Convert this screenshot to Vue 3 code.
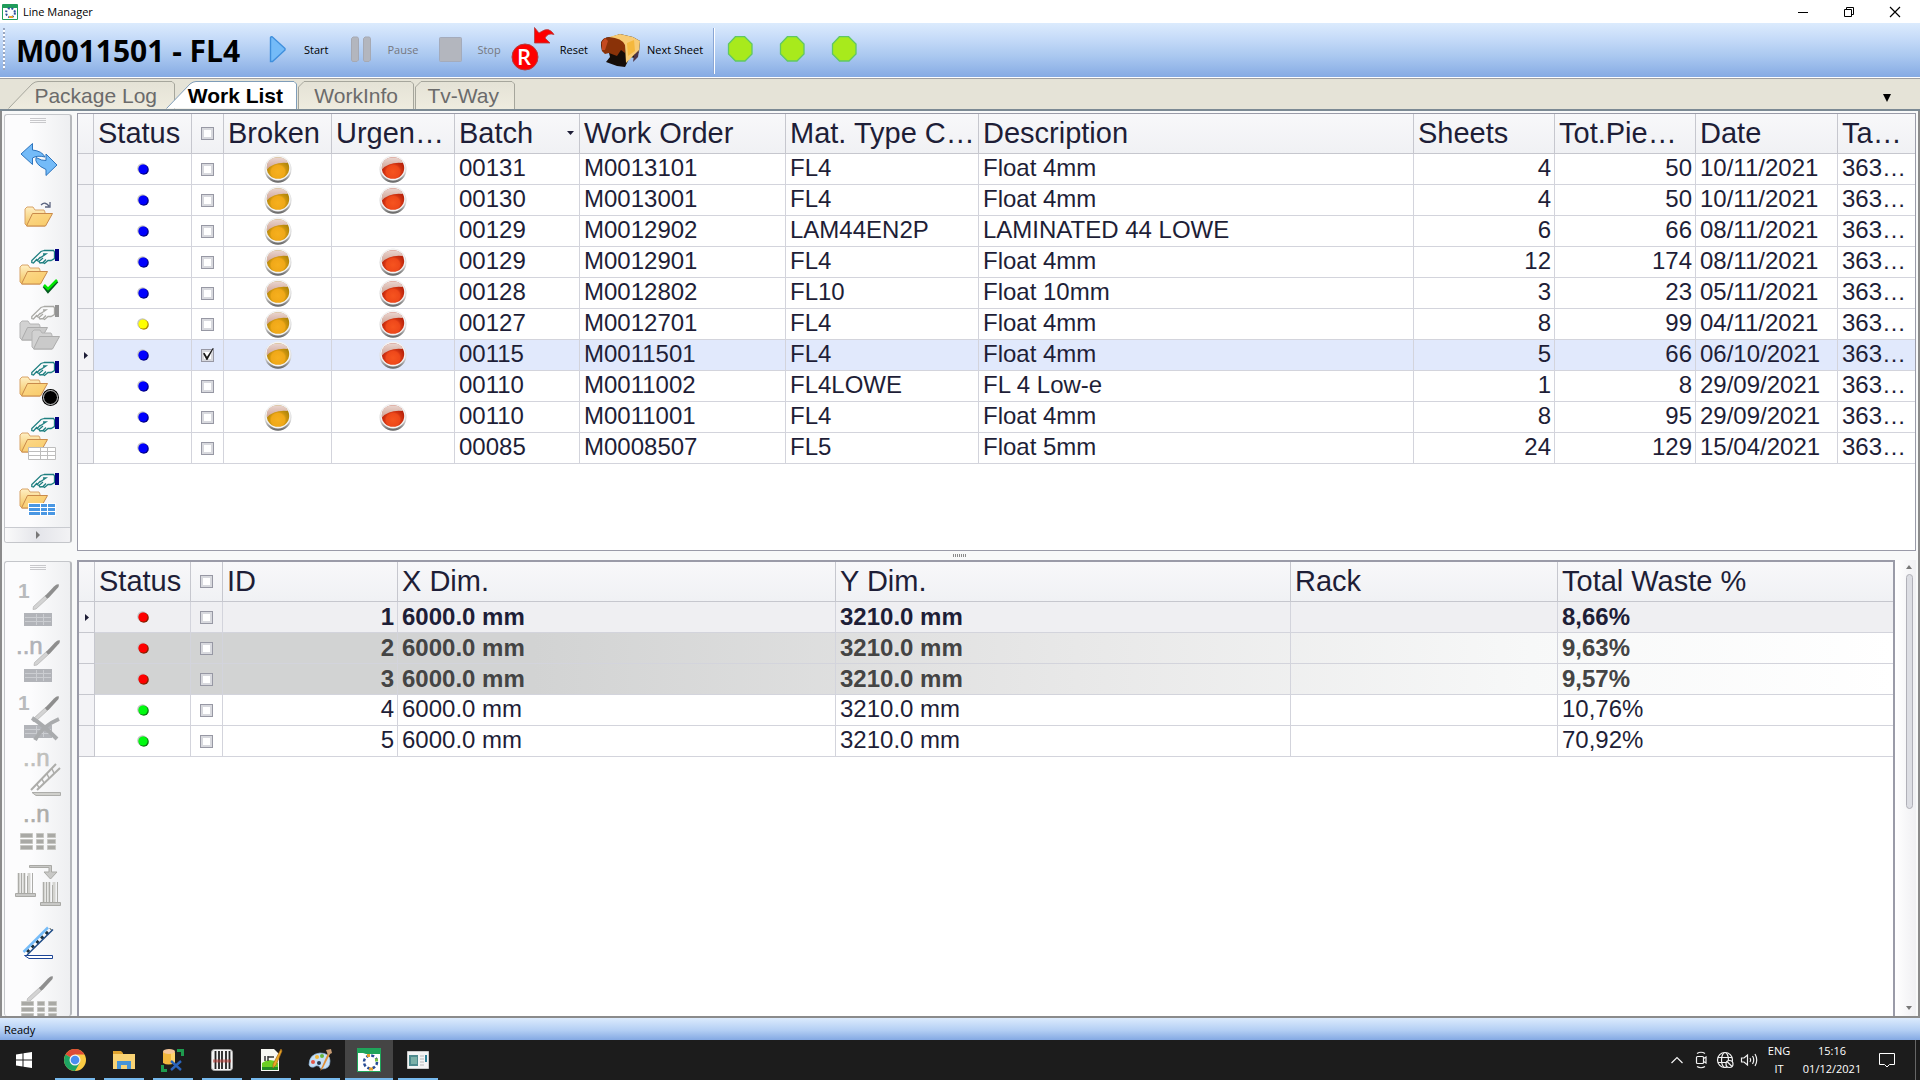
<script setup>
import { ref } from 'vue'

const tabs = [
  { name: 'Package Log', kind: 'first', w: 168 },
  { name: 'Work List', kind: 'active', w: 132 },
  { name: 'WorkInfo', kind: 'small', w: 117 },
  { name: 'Tv-Way', kind: 'small', w: 101 }
]

const tabPath = (t) => {
  const r = t.w - 1
  if (t.kind === 'small') return `M0.5 28V6L6 0.5H${r - 3}L${r - 0.5} 3V28`
  return `M0.5 27.5L24 3Q27 0.5 30 0.5H${r - 3}L${r - 0.5} 3V28`
}

const mk = (status, broken, urgent, batch, order, type, desc, sheets, pieces, date, checked = false) =>
  ({ status, broken, urgent, batch, order, type, desc, sheets, pieces, date, checked })

const orders = ref([
  mk('blue', 1, 1, '00131', 'M0013101', 'FL4', 'Float 4mm', 4, 50, '10/11/2021'),
  mk('blue', 1, 1, '00130', 'M0013001', 'FL4', 'Float 4mm', 4, 50, '10/11/2021'),
  mk('blue', 1, 0, '00129', 'M0012902', 'LAM44EN2P', 'LAMINATED 44 LOWE', 6, 66, '08/11/2021'),
  mk('blue', 1, 1, '00129', 'M0012901', 'FL4', 'Float 4mm', 12, 174, '08/11/2021'),
  mk('blue', 1, 1, '00128', 'M0012802', 'FL10', 'Float 10mm', 3, 23, '05/11/2021'),
  mk('yellow', 1, 1, '00127', 'M0012701', 'FL4', 'Float 4mm', 8, 99, '04/11/2021'),
  mk('blue', 1, 1, '00115', 'M0011501', 'FL4', 'Float 4mm', 5, 66, '06/10/2021', true),
  mk('blue', 0, 0, '00110', 'M0011002', 'FL4LOWE', 'FL 4 Low-e', 1, 8, '29/09/2021'),
  mk('blue', 1, 1, '00110', 'M0011001', 'FL4', 'Float 4mm', 8, 95, '29/09/2021'),
  mk('blue', 0, 0, '00085', 'M0008507', 'FL5', 'Float 5mm', 24, 129, '15/04/2021')
])

const sheets = ref([
  { id: 1, status: 'red', waste: '8,66%', look: 'current' },
  { id: 2, status: 'red', waste: '9,63%', look: 'done' },
  { id: 3, status: 'red', waste: '9,57%', look: 'done' },
  { id: 4, status: 'green', waste: '10,76%', look: '' },
  { id: 5, status: 'green', waste: '70,92%', look: '' }
])

const bullets = {
  blue: ['#0000fe', '#000086'],
  yellow: ['#ffff00', '#b08a00'],
  red: ['#fe0000', '#862200'],
  green: ['#00fa10', '#0a7a10']
}

const folderTools = ['refresh', 'open', 'check', 'multi', 'record', 'grid', 'gridfill']
const sheetTools = ['cut-one', 'cut-n', 'cut-del', 'rack-n', 'rows-n', 'move', 'rack', 'cut-rows']
const apps = ['chrome', 'explorer', 'dbtools', 'barcode', 'notepad', 'paint', 'line', 'window']
</script>

<template>
  <div class="window">
    <svg class="defs" aria-hidden="true">
      <defs>
        <linearGradient id="gFolder" x1="0" y1="0" x2="0" y2="1">
          <stop offset="0" stop-color="#fff0c4" /><stop offset="1" stop-color="#f3c35c" />
        </linearGradient>
        <linearGradient id="gFront" x1="0" y1="0" x2="1" y2="1">
          <stop offset="0" stop-color="#fdd98a" /><stop offset="1" stop-color="#f7ca68" />
        </linearGradient>
        <linearGradient id="gRim" x1="0" y1="0" x2="0" y2="1">
          <stop offset="0" stop-color="#dcdcdc" /><stop offset=".6" stop-color="#dedede" /><stop offset="1" stop-color="#606060" />
        </linearGradient>
        <radialGradient id="gAmber" cx=".5" cy=".68" r=".6">
          <stop offset="0" stop-color="#f6b01e" /><stop offset=".5" stop-color="#f0a818" /><stop offset=".62" stop-color="#cf960e" /><stop offset=".9" stop-color="#b0860a" />
        </radialGradient>
        <radialGradient id="gRed" cx=".5" cy=".68" r=".6">
          <stop offset="0" stop-color="#f6541f" /><stop offset=".5" stop-color="#ee481a" /><stop offset=".62" stop-color="#d23412" /><stop offset=".9" stop-color="#b8220a" />
        </radialGradient>
        <linearGradient id="gGloss" x1="0" y1="0" x2="0" y2="1">
          <stop offset="0" stop-color="#ead6d0" /><stop offset="1" stop-color="#cfa294" />
        </linearGradient>
        <linearGradient id="gTab" x1="0" y1="0" x2="0" y2="1">
          <stop offset="0" stop-color="#e4e2d6" /><stop offset="1" stop-color="#efecdf" />
        </linearGradient>
        <symbol id="folder" viewBox="0 0 30 21" overflow="visible">
          <path d="M1 18V3L3 1H9L11 4H20L21 6V20H3Z" fill="url(#gFolder)" stroke="#d9a469" />
          <path d="M8.500 7.500H28.500L21.500 20H2.500Z" fill="url(#gFront)" stroke="#c98a4b" />
        </symbol>
        <symbol id="folderGray" viewBox="0 0 30 21" overflow="visible">
          <path d="M1 18V3L3 1H9L11 4H20L21 6V20H3Z" fill="#d2d2d2" stroke="#b4b4b4" />
          <path d="M8.500 7.500H28.500L21.500 20H2.500Z" fill="#cacaca" stroke="#acacac" />
        </symbol>
        <symbol id="hand" viewBox="0 0 28 15" overflow="visible">
          <path d="M13 1.500H22.500L23.500 3V9.500L20 11.500H17L13.500 14.500L12 13.500L15 10.500M12 13.500L9 14L8 12.500L12 9M8 12.500L6 11.500L9.500 8M6 10L2.500 14L0.800 13.500V11.500L10 2.500L13 1.500M12 5L15 5L9 9" fill="#fff" fill-opacity=".5" stroke="currentColor" stroke-width="1.300" />
        </symbol>
        <symbol id="pen" viewBox="0 0 28 28" overflow="visible">
          <path d="M1 26.500L1.500 23.500L14 12L16.500 14.500L4 26Z" fill="#d3d3d3" stroke="#b8b8b8" stroke-width=".8" />
          <path d="M13 13L22 3.500Q25 .5 27 1.500L26.500 4L17 14.500L15 15.500Z" fill="#8e8e8e" />
        </symbol>
        <symbol id="bricks" viewBox="0 0 28 13">
          <path d="M0 0H28V13H0Z" fill="#b2b4b9" />
          <path d="M1 4.500H27M1 8.500H27M12.500 1V12M19.500 1V12" stroke="#cbcdd1" />
        </symbol>
        <symbol id="rows" viewBox="0 0 36 17">
          <g fill="#a9a9a5" stroke="#c6c6c2">
            <path d="M.5 .5H12.500V4.500H.5ZM16.500 .5H23.500V4.500H16.500ZM27.500 .5H35.500V4.500H27.500Z" />
            <path d="M.5 6.500H12.500V10.500H.5ZM16.500 6.500H23.500V10.500H16.500ZM27.500 6.500H35.500V10.500H27.500Z" />
            <path d="M.5 12.500H12.500V16.500H.5ZM16.500 12.500H23.500V16.500H16.500ZM27.500 12.500H35.500V16.500H27.500Z" />
          </g>
        </symbol>
      </defs>
    </svg>

    <header class="titlebar">
      <svg width="16" height="16" viewBox="0 0 16 16">
        <path d="M.5 .5H15.500V15.500H.5Z" fill="#fff" stroke="#1f9c5a" />
        <path d="M1 1H15V4H1Z" fill="#1f9c5a" />
        <circle cx="8.500" cy="8.700" r="4.400" fill="none" stroke="#2b4f9a" stroke-width="2" stroke-dasharray="2 1.500" />
        <path d="M7 13H11" stroke="#e8a22c" stroke-width="2" /><path d="M3 5H7L5 7Z" fill="#fff" />
      </svg>
      <span class="caption">Line Manager</span>
      <button aria-label="Minimize"><svg width="12" height="12"><path d="M1 6.500H11" stroke="#000" /></svg></button>
      <button aria-label="Restore"><svg width="12" height="12"><path d="M1.500 3.500H8.500V10.500H1.500ZM3.500 3.500V1.500H10.500V8.500H8.500" fill="none" stroke="#000" /></svg></button>
      <button aria-label="Close"><svg width="12" height="12"><path d="M1 1L11 11M11 1L1 11" stroke="#000" stroke-width="1.200" /></svg></button>
    </header>

    <div class="toolbar">
      <span class="dots"></span>
      <h1>M0011501 - FL4</h1>
      <button>
        <svg width="48" height="48"><path d="M16.500 12.500Q17 11.500 18.500 12L31 23.500V25L18.500 36.500H16.500Z" fill="#74bbf8" stroke="#3f8fdc" stroke-width="1.400" /></svg>
        <span>Start</span>
      </button>
      <button disabled>
        <svg width="48" height="48"><path d="M14.500 13.500L16 12H20.500L21.500 13.500V35L20 36.500H15.500L14.500 35ZM26.500 13.500L28 12H32.500L33.500 13.500V35L32 36.500H27.500L26.500 35Z" fill="#b3b6be" stroke="#a6a9b3" /></svg>
        <span>Pause</span>
      </button>
      <button disabled>
        <svg width="48" height="48"><rect x="12.500" y="12.500" width="22" height="24" rx="1" fill="#b3b6be" stroke="#a4abbb" /></svg>
        <span>Stop</span>
      </button>
      <button>
        <svg width="48" height="48" viewBox="0 0 48 48" overflow="visible">
          <circle cx="15" cy="32" r="13" fill="#fe0000" stroke="#b43c3c" />
          <text x="7" y="40" font-family="Open Sans, sans-serif" font-weight="600" font-size="22" fill="#fff">R</text>
          <path d="M24.500 2.500V18H40L35 13Q38 7.500 44 9.500Q39 1.500 31.500 6.500L29 8Z" fill="#fe0000" stroke="#b43c3c" stroke-width=".8" />
        </svg>
        <span>Reset</span>
      </button>
      <button>
        <svg width="48" height="48" viewBox="0 0 48 48">
          <path d="M4 20Q4 12 14 12L23 9L36 12L43 16L42 27L38 33L33 32L28 42L20 41L9 37L13 32L12 28L5 26Z" fill="#160d08" />
          <path d="M4 18Q5 12 14 12Q26 12 28 18V28L24 25L20 31L12 28L8 29L5 26Z" fill="#8a3208" />
          <path d="M5 17L8 13L11 16L8 25L5 25Z" fill="#c44a20" />
          <path d="M12 12L23 9L36 12L43 16L42 27L37 30L29 38L28 20Q25 13 12 12Z" fill="#f8cb74" />
          <path d="M30 18L37 15L38 26L31 31Z" fill="#f5b83e" />
          <path d="M37 30L42 25L41 32L36 37Z" fill="#4d3546" />
        </svg>
        <span>Next Sheet</span>
      </button>
      <i class="separator"></i>
      <svg v-for="n in 3" :key="n" class="light" width="52" height="26"><path d="M8.500 .5H17.500L25 8V18L18 25H8.500L1.500 18V8Z" transform="translate(12 0)" fill="#a8ea1c" stroke="#5fc765" stroke-width="1.300" /></svg>
    </div>

    <nav class="tabs">
      <button v-for="t in tabs" :key="t.name" :class="['tab', t.kind]" :style="{ width: t.w + 'px' }">
        <svg :width="t.w" height="28"><path :d="tabPath(t)" :fill="t.kind === 'active' ? '#fff' : 'url(#gTab)'" :stroke="t.kind === 'active' ? '#7f9db9' : '#a6a69c'" /></svg>
        <span>{{ t.name }}</span>
      </button>
      <button class="tablist" aria-label="Tab list"><svg width="8" height="8"><path d="M0 0H8L4 8Z" /></svg></button>
    </nav>

    <main>
      <section class="upper">
        <aside class="panel">
          <div class="grip"><i></i></div>
          <button v-for="t in folderTools" :key="t" class="tool" :aria-label="t">
            <svg width="60" height="56" viewBox="0 0 60 56">
              <g v-if="t === 'refresh'" transform="translate(0 10)">
                <path d="M13 13L24.500 2.500V9Q34 10 37 16Q29 14 24.500 17V23.500Z" fill="#74bbf8" stroke="#2d74bd" />
                <path d="M49 24L38 13V19.500Q34 20 28 16.500Q26 23 38 28.500V34.500Z" fill="#74bbf8" stroke="#2d74bd" />
              </g>
              <template v-else-if="t === 'open'">
                <use href="#folder" x="16" y="19" width="30" height="21" />
                <path d="M33 18Q37 14 41 19M37 20H42V15" fill="none" stroke="#5b6480" stroke-width="1.300" />
              </template>
              <template v-else>
                <use href="#hand" x="23" y="6" width="28" height="15" :color="t === 'multi' ? '#a9a9a5' : '#1f7f80'" />
                <rect x="47" y="6" width="4" height="12" :fill="t === 'multi' ? '#929292' : '#000080'" />
                <use :href="t === 'multi' ? '#folderGray' : '#folder'" x="11" y="21" width="30" height="21" />
                <use v-if="t === 'multi'" href="#folderGray" x="23" y="30" width="30" height="21" />
                <path v-if="t === 'check'" d="M36 43L40 48L49 38" fill="none" stroke="#055a20" stroke-width="3.500" />
                <path v-if="t === 'check'" d="M36 42L40 46L49 37" fill="none" stroke="#00e800" stroke-width="2.500" />
                <g v-if="t === 'record'"><circle cx="42.500" cy="42.500" r="8.500" /><circle cx="42.500" cy="42.500" r="7" fill="none" stroke="#fff" stroke-width=".8" /></g>
                <path v-if="t === 'grid'" d="M20.500 36.500H47.500V48.500H20.500ZM20.500 40.500H47.500M20.500 44.500H47.500M32.500 36.500V48.500M39.500 36.500V48.500" fill="#fff" stroke="#bdbdbd" />
                <g v-if="t === 'gridfill'"><path d="M20 36H48V49H20Z" fill="#fff" /><path d="M21 38.500H47M21 42.500H47M21 46.500H47" stroke="#4a97e3" stroke-width="3" /><path d="M32.500 36V48M39.500 36V48" stroke="#fff" /></g>
              </template>
            </svg>
          </button>
          <button class="more" aria-label="More tools"><svg width="4" height="8"><path d="M0 0L4 4L0 8Z" fill="#777" /></svg></button>
        </aside>

        <div class="grid-frame">
          <table>
            <colgroup>
              <col class="c16" /><col class="c98" /><col class="c32" /><col class="c108" /><col class="c123" /><col class="c125" />
              <col class="c206" /><col class="c193" /><col /><col class="c141" /><col class="c141" /><col class="c142" /><col class="c77" />
            </colgroup>
            <thead>
              <tr>
                <th></th><th>Status</th>
                <th class="mid"><input type="checkbox" aria-label="Select all work orders" /></th>
                <th>Broken</th><th>Urgen…</th>
                <th><div class="sorted">Batch<svg width="7" height="4"><path d="M0 0H7L3.500 4Z" fill="#1e1e37" /></svg></div></th>
                <th>Work Order</th><th>Mat. Type C…</th><th>Description</th><th>Sheets</th><th>Tot.Pie…</th><th>Date</th><th>Ta…</th>
              </tr>
            </thead>
            <tbody>
              <tr v-for="o in orders" :key="o.order" :class="{ selected: o.checked }">
                <td class="marker"><svg v-if="o.order === 'M0011501'" width="4" height="7"><path d="M0 0L4 3.500L0 7Z" fill="#1e1e37" /></svg></td>
                <td class="mid"><svg width="12" height="12"><circle cx="5.500" cy="5.500" r="5.300" fill="#c4c4c4" /><circle cx="6.800" cy="6.800" r="5" :fill="bullets[o.status][1]" /><circle cx="6" cy="6" r="4.600" :fill="bullets[o.status][0]" /></svg></td>
                <td class="mid"><input type="checkbox" v-model="o.checked" :aria-label="'Select ' + o.order" /></td>
                <td v-for="(on, i) in [o.broken, o.urgent]" :key="i" class="mid">
                  <svg v-if="on" width="28" height="28" viewBox="0 0 28 28">
                    <circle cx="14" cy="14.200" r="13.500" fill="url(#gRim)" />
                    <circle cx="14" cy="13" r="12.500" fill="#f4f4f4" />
                    <ellipse cx="14" cy="13" rx="11.200" ry="10.800" :fill="i ? 'url(#gRed)' : 'url(#gAmber)'" />
                    <path d="M3 14.500Q2 6 8 3.500Q14 .8 20 3.500Q23 5 24 8Q10 6.500 3 14.500Z" fill="url(#gGloss)" />
                  </svg>
                </td>
                <td>{{ o.batch }}</td><td>{{ o.order }}</td><td>{{ o.type }}</td><td>{{ o.desc }}</td>
                <td class="num">{{ o.sheets }}</td><td class="num">{{ o.pieces }}</td><td>{{ o.date }}</td><td>363…</td>
              </tr>
            </tbody>
          </table>
        </div>
      </section>

      <div class="splitter"><i></i></div>

      <section class="lower">
        <aside class="panel">
          <div class="grip"><i></i></div>
          <button v-for="t in sheetTools" :key="t" class="tool" :aria-label="t" :disabled="t !== 'rack'">
            <svg width="60" height="56" viewBox="0 0 60 56">
              <template v-if="t === 'cut-one' || t === 'cut-del'">
                <text x="10" y="20" font-size="21" font-weight="bold" fill="#b9bbbd">1</text>
                <use href="#pen" x="24" y="5" width="28" height="28" />
                <use href="#bricks" x="16" y="35" width="28" height="13" />
                <path v-if="t === 'cut-del'" d="M24 28Q34 34 49 49M51 29Q34 36 27 50" fill="none" stroke="#a9abad" stroke-width="4" />
              </template>
              <template v-else-if="t === 'cut-n'">
                <text x="8" y="20" font-size="24" fill="#b0b2b8" stroke="#b0b2b8" stroke-width=".6">..n</text>
                <use href="#pen" x="25" y="5" width="28" height="28" />
                <use href="#bricks" x="16" y="35" width="28" height="13" />
              </template>
              <template v-else-if="t === 'rack-n'">
                <text x="15" y="20" font-size="24" fill="#c0c0bc" stroke="#c0c0bc" stroke-width=".6">..n</text>
                <path d="M23 44L48 18M29 44L52 22" stroke="#adadaa" stroke-width="2" />
                <path d="M29 38L31 42M34 33L36 37M39 28L41 32M44 23L46 27" stroke="#adadaa" stroke-width="1.500" />
                <path d="M24 46.500H52.500V49.500H28Z" fill="#d0d0cc" stroke="#adadaa" />
              </template>
              <template v-else-if="t === 'rows-n'">
                <text x="15" y="20" font-size="24" fill="#adadaa" stroke="#adadaa" stroke-width=".6">..n</text>
                <use href="#rows" x="12" y="31" width="36" height="17" />
              </template>
              <template v-else-if="t === 'move'">
                <path d="M21.500 7.500H43.500V14H49L42.500 21L36 14H41V9.500H21.500Z" fill="#c8c8c6" stroke="#a9a9a5" />
                <path d="M11 15V35M16 15V35M21 15V35M36 24V44M41 24V44M46 24V44" stroke="#d4d4d0" stroke-width="3" />
                <path d="M10.500 15V35M13.500 15V35M16.500 15V35M19.500 18V35M24.500 15V35M35.500 24V44M38.500 24V44M41.500 24V44M44.500 27V44M49.500 24V44" stroke="#acaca8" />
                <path d="M7.500 35.500H27.500V38.500H7.500ZM32.500 44.500H52.500V47.500H32.500Z" fill="#c8c8c6" stroke="#a9a9a5" />
              </template>
              <template v-else-if="t === 'rack'">
                <path d="M19 38L43 15" stroke="#1b2f3c" stroke-width="3" stroke-dasharray="3 3.500" />
                <path d="M15.500 38L40 13.500" stroke="#74bbf8" stroke-width="2.500" />
                <path d="M19 41L45 15.500" stroke="#1d4a86" stroke-width="1.500" />
                <path d="M16.500 41.500H44.500V44.500H21Z" fill="#fff" stroke="#1c4496" />
              </template>
              <template v-else>
                <use href="#pen" x="18" y="5" width="28" height="28" />
                <use href="#rows" x="13" y="31" width="36" height="17" />
              </template>
            </svg>
          </button>
        </aside>

        <div class="grid-frame thick">
          <table>
            <colgroup>
              <col class="c16" /><col class="c96" /><col class="c32" /><col class="c175" /><col class="c438" /><col /><col class="c267" /><col class="c335" />
            </colgroup>
            <thead>
              <tr>
                <th></th><th>Status</th>
                <th class="mid"><input type="checkbox" aria-label="Select all sheets" /></th>
                <th>ID</th><th>X Dim.</th><th>Y Dim.</th><th>Rack</th><th>Total Waste %</th>
              </tr>
            </thead>
            <tbody>
              <tr v-for="s in sheets" :key="s.id" :class="s.look">
                <td class="marker"><svg v-if="s.id === 1" width="4" height="7"><path d="M0 0L4 3.500L0 7Z" fill="#1e1e37" /></svg></td>
                <td class="mid"><svg width="12" height="12"><circle cx="5.500" cy="5.500" r="5.300" fill="#c4c4c4" /><circle cx="6.800" cy="6.800" r="5" :fill="bullets[s.status][1]" /><circle cx="6" cy="6" r="4.600" :fill="bullets[s.status][0]" /></svg></td>
                <td class="mid"><input type="checkbox" :aria-label="'Select sheet ' + s.id" /></td>
                <td class="num">{{ s.id }}</td><td>6000.0 mm</td><td>3210.0 mm</td><td></td><td>{{ s.waste }}</td>
              </tr>
            </tbody>
          </table>
        </div>

        <div class="scroll">
          <svg width="6" height="4"><path d="M0 4L3 0L6 4Z" fill="#777" /></svg>
          <div class="track"><i></i></div>
          <svg width="6" height="4"><path d="M0 0L3 4L6 0Z" fill="#777" /></svg>
        </div>
      </section>
    </main>

    <div class="statusbar">Ready</div>

    <footer class="taskbar">
      <button class="start" aria-label="Start menu"><svg width="16" height="16"><path d="M0 2.500L6.500 1.500V7.500H0ZM7.500 1.300L16 0V7.500H7.500ZM0 8.500H6.500V14.500L0 13.500ZM7.500 8.500H16V16L7.500 14.700Z" fill="#fff" /></svg></button>
      <button v-for="a in apps" :key="a" :class="['app', { on: a === 'line' }]" :aria-label="a">
        <svg width="24" height="24" viewBox="0 0 24 24">
          <g v-if="a === 'chrome'">
            <circle cx="12" cy="12" r="11" fill="#fbcb43" /><path d="M12 12L2.500 6.500A11 11 0 0 1 21.500 6.500H12Z" fill="#de4b36" /><path d="M12 12L2.500 6.500A11 11 0 0 0 12 23L16.800 14.700Z" fill="#1da462" /><circle cx="12" cy="12" r="5.500" fill="#f4f4f4" /><circle cx="12" cy="12" r="4.300" fill="#4a8df0" />
          </g>
          <g v-else-if="a === 'explorer'">
            <path d="M1 3H9L11 5V21H1Z" fill="#e0a32e" /><path d="M1 6H23V21H1Z" fill="#f9d374" /><path d="M5 21V13H19V21H15V17H9V21Z" fill="#4794d8" />
          </g>
          <g v-else-if="a === 'dbtools'">
            <path d="M2 4V15Q7 18 14 15V4Z" fill="#f3b73c" /><path d="M10 5H14V15H10Z" fill="#ffd36a" /><ellipse cx="8" cy="3.500" rx="6" ry="2.500" fill="#f8c79a" /><path d="M16 2.500H21.500V8M1.500 17V22.500H6" fill="none" stroke="#1e9b4e" stroke-width="3" /><path d="M10 13L20 22M20 13L10 22" stroke="#2a64bd" stroke-width="2.400" />
          </g>
          <g v-else-if="a === 'barcode'">
            <rect x="1.500" y="1.500" width="21" height="21" rx="3" fill="#f4f4f4" stroke="#a8a8a8" /><path d="M5.500 3V21M9 3V21M12 3V21M16 3V21M19.500 3V21" stroke="#222" stroke-width="1.800" /><path d="M3 13H21" stroke="#b8403a" stroke-width="3" opacity=".6" />
          </g>
          <g v-else-if="a === 'notepad'">
            <path d="M2 1H15L20 6V23H2Z" fill="#f7f8f2" /><path d="M3 15Q11 9 19 15V22H3Z" fill="#6cd023" /><path d="M3 19H19V22H3Z" fill="#238c24" /><path d="M6 8V13M9 8V13M9 9H15" stroke="#333" stroke-width="1.500" /><path d="M22 1L14 16V20L17 17L23 3Z" fill="#eca725" stroke="#a36a1b" stroke-width=".7" />
          </g>
          <g v-else-if="a === 'paint'">
            <path d="M1 17Q1 6 12 5Q22 5 22 13Q22 21 14 21Q12 21 11 18Q8 17 6 19Q2 20 1 17Z" fill="#c4e0f8" stroke="#8eb4d8" stroke-width=".7" /><circle cx="5" cy="14" r="2" fill="#e35748" /><circle cx="9" cy="9" r="2" fill="#f4b83c" /><circle cx="14" cy="8" r="2" fill="#66b63e" /><circle cx="11" cy="15" r="2" fill="#273950" /><path d="M20 5L12 23L15 20L22 6Z" fill="#e08f37" /><path d="M18 2L23 1L24 5L20 7Z" fill="#c99c74" />
          </g>
          <g v-else-if="a === 'line'">
            <path d="M.5 .5H23.500V23.500H.5Z" fill="#fff" stroke="#1fa45a" /><path d="M1 1H23V6H9L6 5H1Z" fill="#1fa45a" /><circle cx="13.500" cy="14" r="6.500" fill="none" stroke="#264b95" stroke-width="2.500" stroke-dasharray="3 2.100" /><path d="M10 7.500H13M12 21H16" stroke="#e3a130" stroke-width="3" /><path d="M18 12H21" stroke="#78c143" stroke-width="3" />
          </g>
          <g v-else>
            <path d="M1.500 3.500H22.500V20.500H1.500Z" fill="#f4f4f4" stroke="#c9c9c9" /><path d="M3 7H12V18H3Z" fill="#4e8a8d" /><path d="M5 9H11V16H5Z" fill="#7bb0a7" /><path d="M14 8H18M14 11H18M14 14H18M14 17H18" stroke="#ccc" stroke-width="1.500" /><path d="M20 7V14" stroke="#2d7f96" stroke-width="2" />
          </g>
        </svg>
      </button>
      <div class="tray">
        <svg width="24" height="20"><path d="M6.500 13L12 7.500L17.500 13" /></svg>
        <svg width="24" height="20"><rect x="7.500" y="6.500" width="7" height="7" rx="1" /><path d="M14.500 8.500L17 7V13L14.500 11.500M8 3.500Q12 1 16 3.500M8 16.500Q12 19 16 16.500" /></svg>
        <svg width="24" height="20"><circle cx="12" cy="10" r="7.500" /><ellipse cx="12" cy="10" rx="3.500" ry="7.500" /><path d="M5 7.500H19M5 12.500H14" /><circle cx="16.500" cy="14" r="3.500" fill="#1d1d1d" /><path d="M14 11.500L19 16.500" /></svg>
        <svg width="24" height="20"><path d="M4.500 8H7L10.500 5V15L7 12H4.500ZM13 8Q14.500 10 13 12M15.500 6Q18 10 15.500 14M18 4Q21.500 10 18 16" /></svg>
      </div>
      <div class="lang"><span>ENG</span><span>IT</span></div>
      <div class="clock"><span>15:16</span><span>01/12/2021</span></div>
      <button class="notes" aria-label="Notifications"><svg width="18" height="18"><path d="M1.500 2.500H16.500V13.500H11.500L9 16L6.500 13.500H1.500Z" fill="none" stroke="#fff" /></svg></button>
      <i class="peek"></i>
    </footer>
  </div>
</template>

<style>
body { margin: 0; }
</style>

<style scoped>
* { box-sizing: border-box; }
.window { display: flex; flex-direction: column; height: 100vh; min-height: 720px; overflow: hidden; background: #fff; font-family: "Liberation Sans", Arial, sans-serif; color: #1e1e37; }
.defs { position: absolute; width: 0; height: 0; }
svg { display: block; flex: none; }
button { border: 0; padding: 0; margin: 0; background: none; font: inherit; color: inherit; }

.titlebar { display: flex; align-items: center; height: 23px; padding-left: 2px; font-family: "Open Sans", sans-serif; font-size: 11px; color: #000; flex: none; }
.caption { flex: 1; padding-left: 5px; line-height: 23px; }
.titlebar button { width: 46px; height: 20px; display: flex; align-items: center; justify-content: center; }
.titlebar button:last-child { margin-right: 2px; }

.toolbar { display: flex; align-items: center; gap: 9px; height: 56px; flex: none; border-bottom: 1px solid #a09fa0; box-shadow: inset 0 -1px #fff; background: linear-gradient(#dcebfd, #c4daf8 30%, #aac8f0 60%, #84a9e3); font-family: "Open Sans", sans-serif; font-size: 11px; color: #000; }
.dots { width: 2px; height: 42px; margin: 0 -4px 4px 3px; background: repeating-linear-gradient(#9aa6bf 0 2px, #fff 2px 4px); }
h1 { margin: 0; padding-left: 6px; width: 235px; font-size: 30px; line-height: 50px; font-weight: 700; white-space: nowrap; }
.toolbar button { display: flex; align-items: center; gap: 2px; margin-bottom: 3px; white-space: nowrap; }
.toolbar button:disabled { color: #76787e; }
.separator { width: 2px; height: 46px; margin-left: 1px; background: linear-gradient(90deg, #8aa6d4 50%, #fff 50%); }
.light { margin-left: -9px; margin-bottom: 3px; }

.tabs { display: flex; align-items: flex-end; height: 32px; flex: none; padding-left: 8px; background: #e5e3d7; border-bottom: 2px solid #7c8a94; }
.tab { position: relative; height: 28px; font-size: 21px; line-height: 30px; color: #6b6b6b; white-space: nowrap; text-align: right; padding-right: 17px; }
.tab svg { position: absolute; left: 0; top: 0; }
.tab span { position: relative; }
.tab.first { padding-right: 19px; }
.tab.active { margin-left: -10px; font-weight: 700; color: #000; padding-right: 15px; z-index: 1; }
.tablist { margin: 0 29px 7px auto; }

main { flex: 1; min-height: 0; display: flex; flex-direction: column; padding: 2px 2px 0; border: solid #8b8b8b; border-width: 0 2px 2px; background: #f8f9f9; }
.upper { display: flex; flex: none; }
.lower { display: flex; flex: 1; min-height: 0; }
.panel { flex: none; width: 68px; margin: 1px 5px 8px 0; border: 1px solid #c4c6ca; border-right: 2px solid #b6b8bc; border-radius: 3px; background: linear-gradient(90deg, #fcfcfd 40%, #eeeff1); display: flex; flex-direction: column; align-items: center; overflow: hidden; }
.lower .panel { margin-bottom: 0; border-bottom: 0; }
.grip { height: 16px; flex: none; padding-top: 3px; }
.grip i { display: block; width: 16px; height: 5px; background: repeating-linear-gradient(#c8c8cb 0 1px, transparent 1px 2px); }
.tool { width: 60px; height: 56px; flex: none; }
.tool svg { overflow: visible; }
.more { width: 100%; height: 15px; margin-top: 4px; border-top: 1px solid #c9cbd0; background: linear-gradient(90deg, #fafafa, #e4e5ea 50%, #f2f2f4); display: flex; align-items: center; justify-content: center; }

.grid-frame { flex: 1; min-width: 0; overflow: hidden; background: #fff; border: 1px solid #9a9ba8; }
.thick { border-width: 2px 2px 0; }
table { width: 100%; table-layout: fixed; border-collapse: separate; border-spacing: 0; }
.c16 { width: 16px; } .c32 { width: 32px; } .c77 { width: 77px; } .c96 { width: 96px; } .c98 { width: 98px; }
.c108 { width: 108px; } .c123 { width: 123px; } .c125 { width: 125px; } .c141 { width: 141px; } .c142 { width: 142px; }
.c175 { width: 175px; } .c193 { width: 193px; } .c206 { width: 206px; } .c267 { width: 267px; } .c335 { width: 335px; } .c438 { width: 438px; }
th, td { padding: 0 3px 0 4px; border: solid #d3d4dc; border-width: 0 1px 1px 0; white-space: nowrap; overflow: hidden; text-align: left; vertical-align: top; font-weight: 400; }
th:last-child, td:last-child { border-right: 0; }
th { height: 40px; font-size: 29px; line-height: 38px; border-color: #c6c7ce; background: linear-gradient(#f8f8fa, #f0f1f4); }
td { height: 31px; font-size: 24px; line-height: 28px; }
.mid { padding: 0; vertical-align: middle; }
.mid svg, .mid input { margin: 0 auto; }
.num { text-align: right; }
.marker, td:first-child { background: #f3f3f6; border-color: #c6c7ce; vertical-align: middle; padding: 0 0 0 6px; }
.sorted { display: flex; align-items: center; justify-content: space-between; padding-right: 2px; }
.selected td:not(.marker) { background: #e1e9fc; }
.current { background: #efeff2; }
.current td, .done td { font-weight: 700; line-height: 30px; }
.done { background: linear-gradient(90deg, #d2d3d3 25%, #e8e8e8 55%, #f7f8f8 80%, #fff); }
.done td { color: #444; }

input { appearance: none; position: relative; display: block; width: 13px; height: 13px; border: 1px solid #9798a4; background: #fff; box-shadow: inset 0 0 0 2px #d8d9de; }
input:checked::after { content: ""; position: absolute; left: 1px; top: -2px; width: 11px; height: 13px; background: #1b1b1b; clip-path: polygon(0 46%, 14% 40%, 36% 72%, 92% 0, 100% 0, 40% 96%, 32% 96%); }

.splitter { flex: none; height: 9px; padding-left: 73px; display: flex; justify-content: center; align-items: center; }
.splitter i { width: 13px; height: 3px; margin-right: 74px; background: repeating-linear-gradient(90deg, #8a8a8a 0 1px, transparent 1px 2px); }

.scroll { flex: none; width: 21px; display: flex; flex-direction: column; align-items: center; padding: 5px 0 6px 7px; background: linear-gradient(90deg, #fff, #f0f0f3); }
.track { flex: 1; padding: 5px 0; }
.track i { display: block; width: 7px; height: 55%; border: 1px solid #b0b0b8; border-radius: 4px; background: #dcdde3; }

.statusbar { flex: none; height: 22px; padding-left: 4px; font-family: "Open Sans", sans-serif; font-size: 11px; line-height: 24px; color: #000; background: linear-gradient(#dcebfd, #b4cff4 55%, #84a9e3); }

.taskbar { flex: none; height: 40px; display: flex; align-items: stretch; background: #1c1c1c; color: #fff; font-family: "Open Sans", sans-serif; font-size: 11px; }
.taskbar button { display: flex; align-items: center; justify-content: center; }
.start { width: 48px; margin-right: 3px; }
.app { position: relative; width: 48px; margin-right: 1px; }
.app::after { content: ""; position: absolute; left: 4px; right: 4px; bottom: 0; height: 2px; background: #76b9ed; }
.app.on { background: #454545; }
.app.on::after { left: 0; right: 0; }
.tray { display: flex; align-items: center; margin-left: auto; }
.tray svg { fill: none; stroke: #f2f2f2; stroke-width: 1.2; }
.lang, .clock { display: flex; flex-direction: column; align-items: center; justify-content: center; line-height: 18px; padding-bottom: 1px; }
.lang { width: 36px; }
.clock { width: 70px; }
.notes { width: 40px; }
.peek { width: 1px; background: #666; margin: 0 4px 0 8px; }
</style>
